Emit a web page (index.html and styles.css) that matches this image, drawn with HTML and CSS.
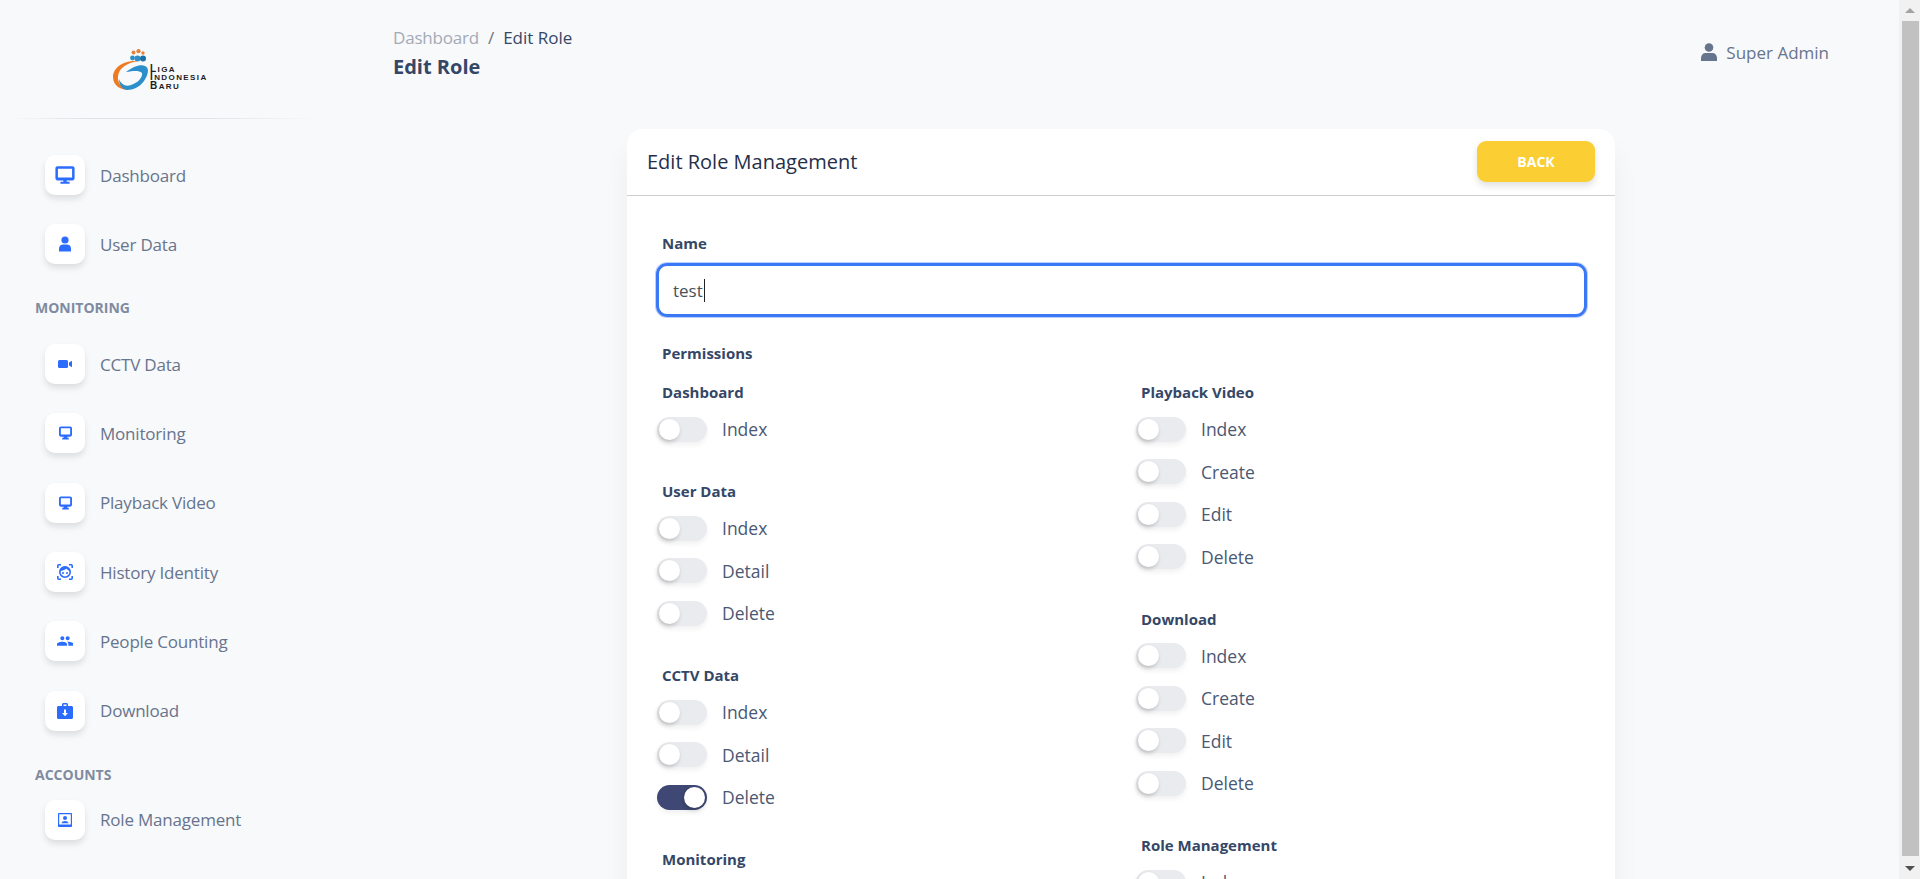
FILE: index.html
```html
<!DOCTYPE html>
<html lang="en">
<head>
<meta charset="UTF-8" />
<meta name="viewport" content="width=device-width, initial-scale=1" />
<title>Edit Role | Liga Indonesia Baru</title>
<link rel="stylesheet" href="styles.css">
</head>
<body>

<aside class="sidebar">
  <div class="brand">
    <svg class="logo" width="96" height="42" viewBox="0 0 96 42">
      <circle cx="20.500" cy="3.500" r="1.900" fill="#e8803a"/>
      <circle cx="25.500" cy="2.200" r="2.100" fill="#e8803a"/>
      <circle cx="30" cy="4" r="1.700" fill="#e8803a"/>
      <circle cx="19.500" cy="9" r="2.400" fill="#2f8fc4"/>
      <circle cx="24.500" cy="9.500" r="3" fill="#2f8fc4"/>
      <circle cx="30" cy="9.500" r="3" fill="#1b6fa8"/>
      <path d="M25 12C10 11 0 19 0 28C0 37 8 41 16 41C10 39 4 35 5 27C6 19 14 14 25 12Z" fill="#ee7a22"/>
      <path d="M13 23C20 18 27 15 32 17C37 19 35 26 31 32C27 38 20 41 14 41C9 40 6 36 6 30C8 35 12 38 18 36C25 34 30 28 29 24C26 21 20 22 13 23Z" fill="#2a8fcb"/>
      <text class="logo-text" x="37" y="23"><tspan class="logo-cap">L</tspan>IGA</text>
      <text class="logo-text" x="37" y="31"><tspan class="logo-cap">I</tspan>NDONESIA</text>
      <text class="logo-text" x="37" y="39.500"><tspan class="logo-cap">B</tspan>ARU</text>
    </svg>
  </div>
  <hr class="brand-line">

  <nav>
    <a class="nav-link" href="#">
      <span class="icon-box">
        <svg width="20" height="20" viewBox="0 0 24 24"><path fill-rule="evenodd" d="M3 1.500h18c1.400 0 2.500 1.100 2.500 2.500v12c0 1.400-1.100 2.500-2.500 2.500h-7V20h3.500v2.500h-11V20H10v-1.500H3C1.600 18.500.5 17.400.5 16V4C.5 2.600 1.600 1.500 3 1.500zM3.500 4.500v10.500h17V4.500z"/></svg>
      </span>
      Dashboard
    </a>
    <a class="nav-link" href="#">
      <span class="icon-box">
        <svg width="14" height="16" viewBox="0 0 14 16"><circle cx="7" cy="4" r="3.600"/><path d="M1 15.500v-2.800C1 10 3 8.600 5 8.600h4c2 0 4 1.400 4 4.100v2.800z"/></svg>
      </span>
      User Data
    </a>

    <div class="nav-label">Monitoring</div>
    <a class="nav-link" href="#">
      <span class="icon-box">
        <svg width="14" height="8" viewBox="0 0 14 8"><rect x="0" y="0" width="10" height="8" rx="1.500"/><path d="M11 2.600L14 .8v6.400L11 5.400z"/></svg>
      </span>
      CCTV Data
    </a>
    <a class="nav-link" href="#">
      <span class="icon-box">
        <svg width="13" height="14" viewBox="0 0 14 14"><path fill-rule="evenodd" d="M2 0h10c1 0 2 .8 2 2v7c0 1.200-1 2-2 2H9v1h1.500v2h-7v-2H5v-1H2c-1 0-2-.8-2-2V2C0 .8 1 0 2 0zm0 2v6.500h10V2z"/></svg>
      </span>
      Monitoring
    </a>
    <a class="nav-link" href="#">
      <span class="icon-box">
        <svg width="13" height="14" viewBox="0 0 14 14"><path fill-rule="evenodd" d="M2 0h10c1 0 2 .8 2 2v7c0 1.200-1 2-2 2H9v1h1.500v2h-7v-2H5v-1H2c-1 0-2-.8-2-2V2C0 .8 1 0 2 0zm0 2v6.500h10V2z"/></svg>
      </span>
      Playback Video
    </a>
    <a class="nav-link" href="#">
      <span class="icon-box">
        <svg class="icon-line" width="16" height="16" viewBox="0 0 16 16">
          <path d="M.8 4V1.800q0-1 1-1H4M12 .8h2.200q1 0 1 1V4M15.200 12v2.200q0 1-1 1H12M4 15.200H1.800q-1 0-1-1V12"/>
          <circle cx="8" cy="8" r="5.200"/>
          <path class="icon-fill" d="M3 7.500C4 4 6 2.500 8 2.500s4 1.500 5 5C11.500 6.500 10 5.500 9.500 4.800 8 6 5 6.500 3 7.500z"/>
          <circle class="icon-fill" cx="6" cy="9" r="1"/>
          <circle class="icon-fill" cx="10" cy="9" r="1"/>
        </svg>
      </span>
      History Identity
    </a>
    <a class="nav-link" href="#">
      <span class="icon-box">
        <svg width="16" height="16" viewBox="0 0 24 24"><path d="M16 11c1.660 0 3-1.340 3-3s-1.340-3-3-3-3 1.340-3 3 1.340 3 3 3zm-8 0c1.660 0 3-1.340 3-3S9.660 5 8 5 5 6.340 5 8s1.340 3 3 3zm0 2c-2.330 0-8 1.170-8 3.500V19h15v-2.500c0-2.330-4.670-3.500-7-3.500zm8 0c-.290 0-.620.020-.970.050 1.160.840 1.970 1.970 1.970 3.450V19h8v-2.500c0-2.330-6.670-3.500-9-3.500z"/></svg>
      </span>
      People Counting
    </a>
    <a class="nav-link" href="#">
      <span class="icon-box">
        <svg width="16" height="16" viewBox="0 0 16 16"><path fill-rule="evenodd" d="M5 3V1.500C5 .7 5.700 0 6.500 0h3c.8 0 1.500.7 1.500 1.500V3h3.500c.8 0 1.500.7 1.500 1.500v10c0 .8-.7 1.500-1.500 1.500h-13C.7 16 0 15.300 0 14.500v-10C0 3.700.7 3 1.500 3zm1.500 0h3V1.500h-3zM7 6.500V10H5l3 3.200 3-3.200H9V6.500z"/></svg>
      </span>
      Download
    </a>

    <div class="nav-label nav-label-tight">Accounts</div>
    <a class="nav-link" href="#">
      <span class="icon-box">
        <svg width="14" height="14" viewBox="0 0 14 14"><path fill-rule="evenodd" d="M1 0h12c.6 0 1 .4 1 1v12c0 .6-.4 1-1 1H1c-.6 0-1-.4-1-1V1c0-.6.4-1 1-1zm.2 1.200v10.200h11.600V1.200z"/><circle cx="7" cy="5" r="2"/><path d="M3.500 10.300c0-1.600 2-2.400 3.500-2.400s3.500.8 3.500 2.400z"/></svg>
      </span>
      Role Management
    </a>
  </nav>
</aside>

<div class="content">
  <header class="topbar">
    <div>
      <div class="crumbs"><span class="crumb-muted">Dashboard</span><span class="crumb-sep">/</span><span>Edit Role</span></div>
      <h1>Edit Role</h1>
    </div>
    <div class="user">
      <svg width="16" height="18" viewBox="0 0 16 18"><circle cx="8" cy="4.500" r="4.300"/><path d="M0 18v-3c0-3 2-5 4.500-5h7c2.500 0 4.500 2 4.500 5v3z"/></svg>
      Super Admin
    </div>
  </header>

  <main class="card">
    <div class="card-head">
      <h2>Edit Role Management</h2>
      <a class="btn-back" href="#">BACK</a>
    </div>
    <form class="card-body">
      <div class="field-label">Name</div>
      <div class="name-input">test<span class="caret"></span></div>
      <div class="field-label perm-title">Permissions</div>

      <div class="perm-grid">
        <div>
          <div class="perm-group">
            <div class="field-label">Dashboard</div>
            <label class="switch"><span class="track"></span>Index</label>
          </div>
          <div class="perm-group">
            <div class="field-label">User Data</div>
            <label class="switch"><span class="track"></span>Index</label>
            <label class="switch"><span class="track"></span>Detail</label>
            <label class="switch"><span class="track"></span>Delete</label>
          </div>
          <div class="perm-group">
            <div class="field-label">CCTV Data</div>
            <label class="switch"><span class="track"></span>Index</label>
            <label class="switch"><span class="track"></span>Detail</label>
            <label class="switch"><span class="track on"></span>Delete</label>
          </div>
          <div class="perm-group">
            <div class="field-label">Monitoring</div>
            <label class="switch"><span class="track"></span>Index</label>
          </div>
        </div>
        <div>
          <div class="perm-group">
            <div class="field-label">Playback Video</div>
            <label class="switch"><span class="track"></span>Index</label>
            <label class="switch"><span class="track"></span>Create</label>
            <label class="switch"><span class="track"></span>Edit</label>
            <label class="switch"><span class="track"></span>Delete</label>
          </div>
          <div class="perm-group">
            <div class="field-label">Download</div>
            <label class="switch"><span class="track"></span>Index</label>
            <label class="switch"><span class="track"></span>Create</label>
            <label class="switch"><span class="track"></span>Edit</label>
            <label class="switch"><span class="track"></span>Delete</label>
          </div>
          <div class="perm-group">
            <div class="field-label">Role Management</div>
            <label class="switch"><span class="track"></span>Index</label>
          </div>
        </div>
      </div>
    </form>
  </main>
</div>

<!-- window scrollbar from the screenshot -->
<div class="scrollbar">
  <span class="arrow arrow-up"></span>
  <span class="thumb"></span>
  <span class="arrow arrow-down"></span>
</div>

</body>
</html>
```

FILE: styles.css
```css
html, body {
  height: 100%;
}
body {
  margin: 0;
  display: flex;
  overflow: hidden;
  background-color: #f8f9fa;
  color: #67748e;
  font-family: "Open Sans", Arial, sans-serif;
}
a {
  color: inherit;
  text-decoration: none;
}

/* sidebar */
.sidebar {
  width: 322px;
  flex-shrink: 0;
}
.brand {
  height: 118px;
  box-sizing: border-box;
  padding: 49px 0 0 113px;
}
.logo {
  display: block;
}
.logo-text {
  font-family: "Liberation Sans", Arial, sans-serif;
  font-size: 8px;
  font-weight: bold;
  letter-spacing: 1.4px;
  fill: #1d1d1f;
}
.logo-cap {
  font-size: 10px;
}
.brand-line {
  margin: 0 0 0 10px;
  width: 310px;
  height: 1px;
  border: 0;
  background: linear-gradient(90deg, transparent, #dfe1e5 25%, #dfe1e5 60%, transparent);
}
nav {
  padding-top: 21.5px;
}
.nav-link {
  display: flex;
  align-items: center;
  gap: 15px;
  padding: 14.65px 0 14.65px 45px;
  font-size: 17px;
  letter-spacing: -.2px;
}
.icon-box {
  width: 40px;
  height: 40px;
  flex-shrink: 0;
  display: flex;
  align-items: center;
  justify-content: center;
  background: #fff;
  border-radius: 10px;
  box-shadow: 0 4px 6px rgba(0, 0, 0, .11);
}
.icon-box svg {
  fill: #2b6cff;
}
.icon-box .icon-line {
  fill: none;
  stroke: #2b6cff;
  stroke-width: 1.6;
}
.icon-box .icon-line .icon-fill {
  fill: #2b6cff;
  stroke: none;
}
.nav-label {
  padding: 18.5px 0 12px 35px;
  font-size: 14px;
  line-height: 20px;
  font-weight: 700;
  text-transform: uppercase;
  color: #7f8ba1;
}
.nav-label-tight {
  padding: 20px 0 0 35px;
}

/* top bar */
.content {
  flex: 1;
  min-width: 0;
}
.topbar {
  display: flex;
  justify-content: space-between;
  height: 129px;
  box-sizing: border-box;
  padding: 26px 91px 0 71px;
}
.crumbs {
  display: flex;
  font-size: 17px;
  line-height: 24px;
  color: #344767;
}
.crumb-muted {
  color: #a3aab8;
  letter-spacing: -.2px;
}
.crumb-sep {
  margin: 0 9px;
  color: #6c757d;
}
h1 {
  margin: 5px 0 0;
  font-size: 20px;
  line-height: 24px;
  font-weight: 700;
  color: #344767;
}
.user {
  display: flex;
  align-items: center;
  gap: 9px;
  height: 24px;
  margin-top: 14px;
  font-size: 17px;
  font-weight: 500;
}
.user svg {
  fill: #67748e;
}

/* card */
.card {
  width: 988px;
  margin: 0 auto;
  background: #fff;
  border-radius: 16px 16px 0 0;
  box-shadow: 0 20px 27px rgba(0, 0, 0, .05);
}
.card-head {
  display: flex;
  align-items: center;
  justify-content: space-between;
  height: 67px;
  box-sizing: border-box;
  padding: 0 20px 1px;
  border-bottom: 1px solid #cfcfcf;
}
h2 {
  margin: 0;
  font-size: 20px;
  font-weight: 400;
  color: #252f4a;
}
.btn-back {
  width: 118px;
  height: 41px;
  line-height: 41px;
  text-align: center;
  background: #fbcf33;
  color: #fff;
  font-size: 14px;
  font-weight: 700;
  border-radius: 9px;
  box-shadow: 0 4px 7px rgba(0, 0, 0, .12);
}
.card-body {
  padding: 37px 28px 0 29px;
}
.field-label {
  padding-left: 6px;
  font-size: 15px;
  line-height: 20px;
  font-weight: 700;
  color: #344767;
}
.name-input {
  display: flex;
  align-items: center;
  height: 54px;
  box-sizing: border-box;
  margin-top: 10px;
  padding-left: 14px;
  border: 3px solid #3b78f5;
  border-radius: 11px;
  box-shadow: 0 0 0 1px rgba(59, 120, 245, .35);
  font-size: 17px;
  color: #495057;
}
.caret {
  width: 1px;
  height: 23px;
  margin-left: 1px;
  background: #222;
}
.perm-title {
  margin: 26px 0 19px;
}
.perm-grid {
  display: grid;
  grid-template-columns: 479px 1fr;
  margin-left: 1px;
}
.perm-group {
  margin-bottom: 30.75px;
}
.perm-group .field-label {
  margin-bottom: 5.75px;
  padding-left: 5px;
}
.switch {
  display: flex;
  align-items: center;
  gap: 15px;
  height: 42.5px;
  font-size: 17.5px;
  color: #4a5873;
}
.track {
  position: relative;
  width: 50px;
  height: 25px;
  flex-shrink: 0;
  border-radius: 13px;
  background: #e9ebef;
  box-shadow: 0 3px 5px rgba(0, 0, 0, .06);
}
.track::after {
  content: "";
  position: absolute;
  top: 2px;
  left: 2px;
  width: 21px;
  height: 21px;
  border-radius: 50%;
  background: #fff;
  box-shadow: -1px 2px 4px rgba(0, 0, 0, .2);
}
.track.on {
  background: #3f4874;
}
.track.on::after {
  left: 27px;
}

/* fake window scrollbar */
.scrollbar {
  position: fixed;
  top: 0;
  right: 0;
  bottom: 0;
  width: 21px;
  display: flex;
  flex-direction: column;
  align-items: center;
  justify-content: space-between;
  background: #f1f1f1;
}
.thumb {
  flex: 1;
  width: 17px;
  margin-right: -1px;
  background: #c1c1c1;
}
.arrow {
  width: 0;
  height: 0;
  margin: 8px 0;
  border-left: 5px solid transparent;
  border-right: 5px solid transparent;
}
.arrow-up {
  border-bottom: 5px solid #a3a3a3;
}
.arrow-down {
  margin-top: 10px;
  margin-bottom: 8px;
  border-top: 5px solid #505050;
}
```
